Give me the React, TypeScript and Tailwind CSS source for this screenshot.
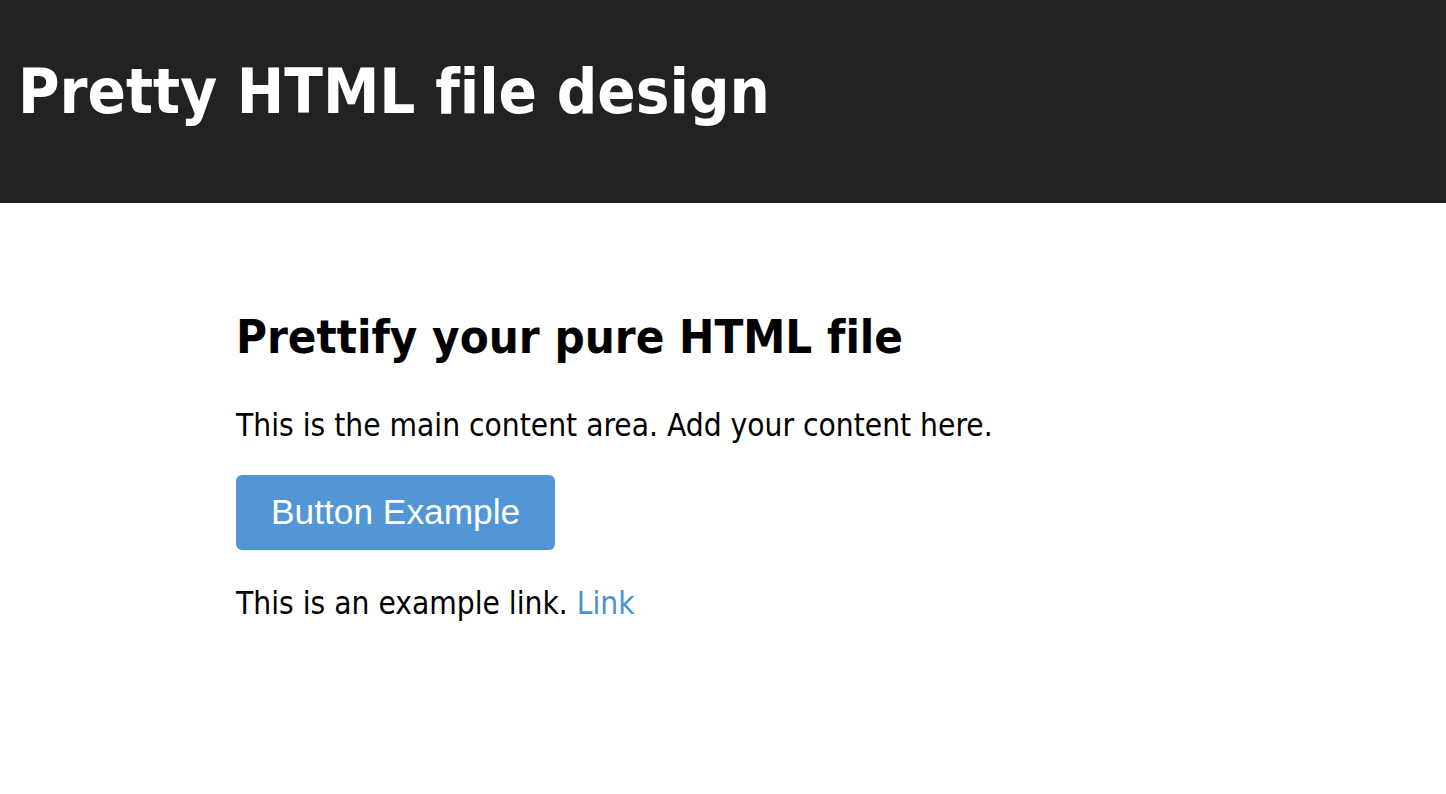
import React from "react";

export default function App() {
  const tahoma = { fontFamily: "'DejaVu Sans Condensed', 'DejaVu Sans', sans-serif" };
  return (
    <div className="min-h-screen bg-white text-black [font-variant-ligatures:none]" style={tahoma}>
      <header className="bg-[#222222] h-[203px] px-[18px] pt-[52px]">
        <h1 className="text-[63px] leading-[80px] font-bold text-white">Pretty HTML file design</h1>
      </header>
      <main className="pl-[236px] pt-[104px]">
        <h2 className="text-[47px] leading-[60px] font-bold">Prettify your pure HTML file</h2>
        <p className="mt-[38px] text-[31.4px] leading-[40px]">This is the main content area. Add your content here.</p>
        <button className="mt-[30px] h-[75px] px-[35px] rounded-[6px] bg-[#5296d5] text-white text-[35.3px] font-['Liberation_Sans',Arial,sans-serif]">
          Button Example
        </button>
        <p className="mt-[33px] text-[31.4px] leading-[40px]">
          This is an example link. <a className="text-[#4a90d9]">Link</a>
        </p>
      </main>
    </div>
  );
}
